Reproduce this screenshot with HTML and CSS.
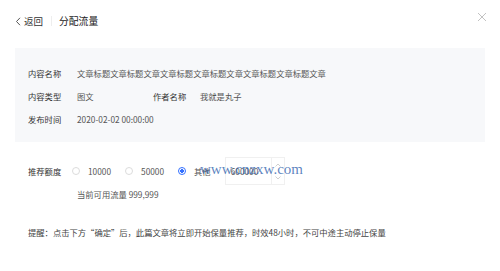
FILE: index.html
```html
<!DOCTYPE html>
<html lang="zh">
<head>
  <meta charset="UTF-8" />
  <title>分配流量</title>
  <link rel="stylesheet" href="styles.css">
</head>
<body>
<div class="page">
  <header class="topbar">
    <a class="back">
      <svg width="7" height="9" viewBox="0 0 7 9"><path d="M5 0.8L1.5 4.5L5 8.2" fill="none" stroke="#555" stroke-width="1"/></svg>
      返回
    </a>
    <span class="sep"></span>
    <span class="title">分配流量</span>
    <svg class="close" width="10" height="10" viewBox="0 0 10 10"><path d="M1 1L9 9M9 1L1 9" stroke="#bbb" stroke-width="0.9"/></svg>
  </header>

  <section class="info">
    <div class="row">
      <span class="label">内容名称</span>
      <span class="value">文章标题文章标题文章文章标题文章标题文章文章标题文章标题文章</span>
    </div>
    <div class="row">
      <span class="label">内容类型</span>
      <span class="value short">图文</span>
      <span class="label author">作者名称</span>
      <span class="value">我就是丸子</span>
    </div>
    <div class="row">
      <span class="label">发布时间</span>
      <span class="value">2020-02-02 00:00:00</span>
    </div>
  </section>

  <section class="form">
    <div class="form-row">
      <span class="label">推荐额度</span>
      <label class="radio"><i class="dot"></i>10000</label>
      <label class="radio"><i class="dot"></i>50000</label>
      <label class="radio checked"><i class="dot"></i>其他</label>
      <div class="number">
        <span class="num-value">600000</span>
        <span class="spin">
          <svg width="6" height="4" viewBox="0 0 6 4"><path d="M0.5 3.5L3 1L5.5 3.5" fill="none" stroke="#bbb" stroke-width="0.7"/></svg>
          <svg width="6" height="4" viewBox="0 0 6 4"><path d="M0.5 0.5L3 3L5.5 0.5" fill="none" stroke="#bbb" stroke-width="0.7"/></svg>
        </span>
      </div>
      <span class="watermark">www.cnzxw.com</span>
    </div>
    <div class="available">当前可用流量 999,999</div>
    <p class="tip">提醒：点击下方“确定”后，此篇文章将立即开始保量推荐，时效48小时，不可中途主动停止保量</p>
  </section>
</div>
</body>
</html>
```

FILE: styles.css
```css
body {
  margin: 0;
  background: #fff;
  font-family: "PingFang SC", "Noto Sans CJK SC", "Noto Sans", sans-serif;
  font-size: 8.3px;
  color: #333;
}

.page {
  width: 500px;
  height: 271px;
  position: relative;
  overflow: hidden;
}

.topbar {
  height: 42px;
  display: flex;
  align-items: center;
  padding: 0 15px;
  position: relative;
}

.back {
  display: flex;
  align-items: center;
  gap: 2px;
  font-size: 9.5px;
  color: #333;
}

.sep {
  width: 1px;
  height: 10px;
  background: #eee;
  margin: 0 7px 0 8px;
}

.title {
  font-size: 9.8px;
  color: #222;
}

.close {
  position: absolute;
  right: 13px;
  top: 12px;
}

.info {
  margin: 6px 15px 0;
  background: #f7f8fa;
  padding: 13px 13px 12px;
  height: 69px;
}

.row {
  display: flex;
  align-items: center;
  height: 23px;
}

.label {
  width: 49px;
  color: #333;
  flex-shrink: 0;
}

.value {
  color: #555;
}

.value.short {
  width: 76px;
}

.label.author {
  width: 47px;
}

.form {
  padding: 15px 28px 0;
  position: relative;
}

.form-row {
  display: flex;
  align-items: center;
  height: 28px;
  position: relative;
}

.radio {
  display: flex;
  align-items: center;
  color: #555;
  margin-right: 19px;
}

.radio .dot {
  width: 6px;
  height: 6px;
  border: 1px solid #dcdcdc;
  border-radius: 50%;
  margin-right: 8px;
  margin-left: -5px;
  box-sizing: content-box;
  background: #fff;
}

.radio.checked .dot {
  border-color: #3370ff;
  background: radial-gradient(circle, #3370ff 0 1.6px, #fff 2px);
}

.radio.checked {
  margin-right: 14px;
}

.number {
  width: 58px;
  height: 26px;
  border: 1px solid #f0f0f0;
  display: flex;
  align-items: center;
  justify-content: space-between;
}

.num-value {
  padding-left: 5px;
  color: #555;
}

.spin {
  width: 12px;
  height: 26px;
  border-left: 1px solid #f0f0f0;
  display: flex;
  flex-direction: column;
  align-items: center;
  justify-content: space-around;
}

.watermark {
  position: absolute;
  left: 172px;
  top: 4px;
  font-family: "Liberation Serif", serif;
  font-size: 15px;
  color: rgba(40, 90, 170, 0.75);
  pointer-events: none;
}

.available {
  margin-top: 2px;
  padding-left: 49px;
  color: #555;
  line-height: 14px;
}

.tip {
  margin: 24px 0 0;
  color: #444;
  line-height: 14px;
}
```
